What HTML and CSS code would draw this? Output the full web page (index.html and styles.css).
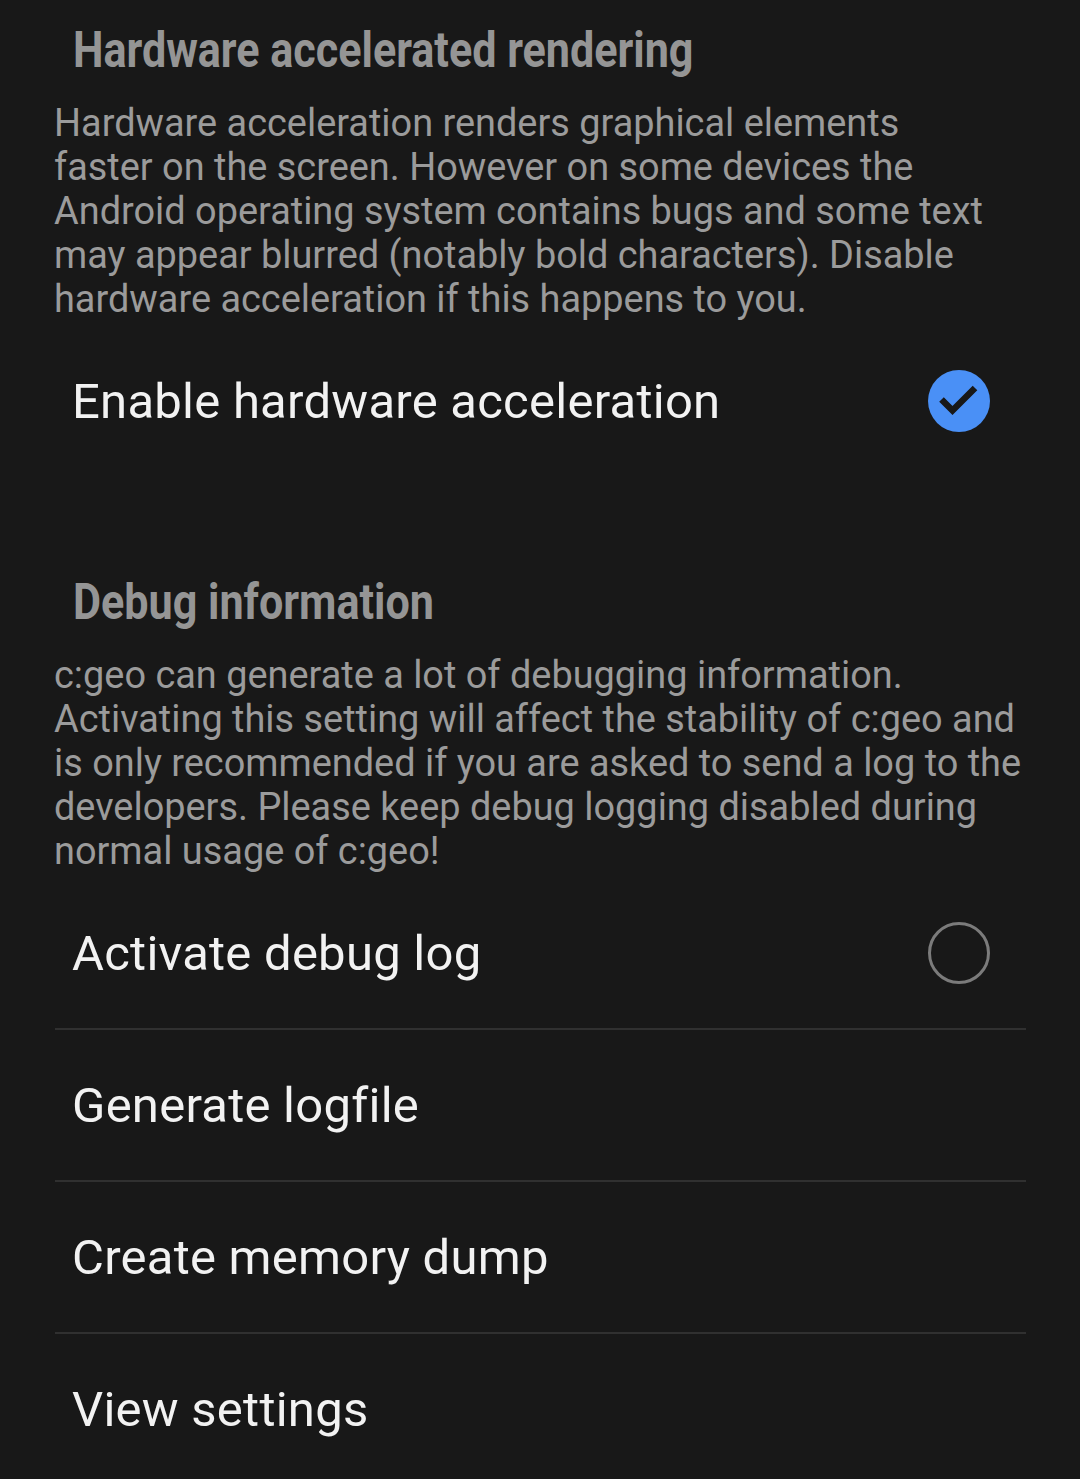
FILE: index.html
```html
<!DOCTYPE html>
<html>
<head>
<meta charset="utf-8">
<link rel="stylesheet" href="styles.css">
</head>
<body>
<main class="screen">
  <section class="category">
    <h2 class="cat-title"><span>Hardware accelerated rendering</span></h2>
    <p class="cat-desc">Hardware acceleration renders graphical elements<br>faster on the screen. However on some devices the<br>Android operating system contains bugs and some text<br>may appear blurred (notably bold characters). Disable<br>hardware acceleration if this happens to you.</p>
    <div class="pref">
      <span class="pref-title">Enable hardware acceleration</span>
      <svg class="check" width="64" height="64" viewBox="0 0 64 64">
        <circle cx="32" cy="32" r="31" fill="#4a90f6"/>
        <path d="M14.5 30.5 L25.5 41.5 L48 19" fill="none" stroke="#181818" stroke-width="6.5" stroke-linecap="butt" stroke-linejoin="miter"/>
      </svg>
    </div>
  </section>
  <section class="category second">
    <h2 class="cat-title"><span>Debug information</span></h2>
    <p class="cat-desc">c:geo can generate a lot of debugging information.<br>Activating this setting will affect the stability of c:geo and<br>is only recommended if you are asked to send a log to the<br>developers. Please keep debug logging disabled during<br>normal usage of c:geo!</p>
    <div class="pref divided">
      <span class="pref-title">Activate debug log</span>
      <svg class="check" width="64" height="64" viewBox="0 0 64 64">
        <circle cx="32" cy="32" r="29.5" fill="none" stroke="#7b7b7b" stroke-width="3"/>
      </svg>
    </div>
    <div class="pref divided"><span class="pref-title">Generate logfile</span></div>
    <div class="pref divided"><span class="pref-title">Create memory dump</span></div>
    <div class="pref"><span class="pref-title">View settings</span></div>
  </section>
</main>
</body>
</html>
```
FILE: styles.css
```css
html, body {
  margin: 0;
  padding: 0;
  background: #181818;
}
body {
  font-family: Roboto, "Noto Sans", sans-serif;
  height: 1479px;
  overflow: hidden;
}
.screen {
  padding: 20px 54px 0 54px;
}
.category {
  display: flex;
  flex-direction: column;
}
.category.second {
  margin-top: 96px;
}
.cat-title {
  margin: 0;
  padding-left: 19px;
  height: 60px;
  line-height: 60px;
  font-size: 50px;
  font-weight: 700;
  color: #959595;
  white-space: nowrap;
}
.cat-title span {
  display: inline-block;
  transform: scaleX(0.862);
  transform-origin: left center;
}
.cat-desc {
  margin: 21px 0 0 0;
  font-size: 37.9px;
  line-height: 44px;
  color: #9b9b9b;
  white-space: nowrap;
}
.pref {
  display: flex;
  align-items: center;
  justify-content: space-between;
  height: 150px;
  padding: 0 35px 0 18px;
  margin-top: 5px;
}
.pref + .pref {
  margin-top: 0;
}
.pref.divided {
  border-bottom: 2px solid #303030;
  margin-left: 1px;
}
.pref.divided .pref-title {
  margin-left: -1px;
}
.pref-title {
  font-size: 49px;
  letter-spacing: 0.25px;
  color: #f2f2f2;
}
.check {
  display: block;
  flex: none;
}
```
